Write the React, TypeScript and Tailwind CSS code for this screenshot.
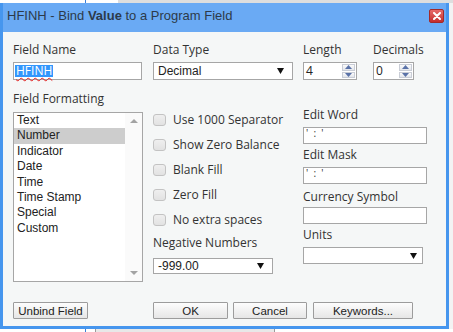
import type { ReactNode } from 'react'

const label = "font-['Open_Sans',sans-serif] text-[12px] leading-[16px] text-[#333]"
const arial = "font-['Liberation_Sans',Arial,sans-serif]"

function Caret() {
  return (
    <svg width="7" height="6" viewBox="0 0 7 6" className="shrink-0">
      <path d="M0 0 H7 L3.5 6 Z" fill="#111" />
    </svg>
  )
}

function Select({ value, w, h, caretRight = 8 }: { value: string; w: string; h: string; caretRight?: number }) {
  return (
    <div className={`${w} ${h} flex items-center border border-[#a6a6a6] bg-white pl-[4px] ${arial} text-[12px] text-[#222]`}>
      <span className="flex-1">{value}</span>
      <span style={{ marginRight: caretRight }}>
        <Caret />
      </span>
    </div>
  )
}

function Spinner({ value, w }: { value: string; w: string }) {
  return (
    <div className={`${w} flex h-[18px] items-stretch border border-[#a6a6a6] bg-white`}>
      <span className="flex-1 pl-[2px] font-['Open_Sans',sans-serif] text-[12px] leading-[16px] text-[#222]">{value}</span>
      <div className="my-[1px] mr-[1px] flex w-[13px] flex-col gap-[1px]">
        {[0, 1].map((i) => (
          <div
            key={i}
            className="flex flex-1 items-center justify-center border border-[#c9cdd6] bg-gradient-to-b from-[#fbfbfb] to-[#e3e6ec]"
          >
            <svg width="7" height="4" viewBox="0 0 7 4">
              <path d={i === 0 ? 'M0 4 L3.5 0 L7 4 Z' : 'M0 0 L3.5 4 L7 0 Z'} fill="#5a72a8" />
            </svg>
          </div>
        ))}
      </div>
    </div>
  )
}

function TextBox({ children }: { children?: ReactNode }) {
  return (
    <div className="h-[17px] w-[124px] border border-[#a6a6a6] bg-white pl-[2px] font-['Open_Sans',sans-serif] text-[10px] leading-[11px] whitespace-pre text-[#333]">
      {children}
    </div>
  )
}

function Check({ text }: { text: string }) {
  return (
    <div className="flex h-[25px] items-center">
      <span className="h-[12px] w-[13px] rounded-[3px] border border-[#c3c3c3] bg-gradient-to-b from-[#efefef] to-[#e2e2e2]" />
      <span className={`ml-[7px] ${label}`}>{text}</span>
    </div>
  )
}

function Btn({ text, w, ml }: { text: string; w: string; ml: string }) {
  return (
    <button
      className={`${w} ${ml} h-[17px] rounded-[1px] border border-[#9c9c9c] bg-gradient-to-b from-[#fdfdfd] to-[#e6e6e6] ${arial} text-[11.5px] leading-[14px] text-[#222]`}
    >
      {text}
    </button>
  )
}

const formats = ['Text', 'Number', 'Indicator', 'Date', 'Time', 'Time Stamp', 'Special', 'Custom']

export default function App() {
  return (
    <div className="flex h-[332px] w-[453px] flex-col overflow-hidden bg-white">
      {/* page behind the dialog */}
      <div className="flex h-[3px] shrink-0">
        <div className="w-[85px] bg-white" />
        <div className="w-[1px] bg-[#3c7fd8]" />
        <div className="w-[32px] bg-white" />
        <div className="flex-1 bg-[#dedede]" />
      </div>

      <div className="flex h-[326px] shrink-0">
        <div className="flex h-[326px] w-[449px] flex-col border-x-[3px] border-b-[3px] border-[#4696ee]">
          <div className="flex h-[29px] shrink-0 items-start bg-[#6aaaf4] pl-[4px] pr-[2px]">
            <span className={`mt-[5px] flex-1 ${arial} text-[13px] leading-[16px] text-[#2d3a4a]`}>
              HFINH - Bind <b>Value</b> to a Program Field
            </span>
            <span className="mt-[6px] flex h-[14px] w-[15px] items-center justify-center rounded-[2px] border border-[#a32a2a] bg-gradient-to-b from-[#e66a6a] to-[#c42b2b]">
              <svg width="8" height="8" viewBox="0 0 8 8">
                <path d="M1 1 L7 7 M7 1 L1 7" stroke="#fff" strokeWidth="2" strokeLinecap="round" />
              </svg>
            </span>
          </div>

          <div className="flex flex-1 flex-col bg-[#f5f7f7] pl-[10px] pt-[10px]">
            <div className="flex">
              {/* column 1 */}
              <div className="flex w-[130px] flex-col">
                <span className={label}>Field Name</span>
                <div className="mt-[4px] flex h-[18px] w-[129px] items-center border border-[#a6a6a6] bg-white pl-[1px]">
                  <span className="bg-[#3297fd] px-[1px] font-['Open_Sans',sans-serif] text-[12px] leading-[12px] text-white underline decoration-[#e02020] decoration-wavy decoration-[1px] underline-offset-[2px]">
                    HFINH
                  </span>
                </div>
                <span className={`mt-[11px] ${label}`}>Field Formatting</span>
                <div className="mt-[5px] flex h-[170px] border border-[#a6a6a6] bg-white">
                  <div className={`flex-1 ${arial} text-[12px] leading-[15.4px] text-[#222]`}>
                    {formats.map((f) => (
                      <div key={f} className={`pl-[3px] ${f === 'Number' ? 'bg-[#cdcdcd]' : ''}`}>
                        {f}
                      </div>
                    ))}
                  </div>
                  <div className="flex w-[17px] flex-col items-center justify-between bg-[#fafafa] py-[6px]">
                    <svg width="8" height="4" viewBox="0 0 8 4">
                      <path d="M0 4 L4 0 L8 4 Z" fill="#a3a3a3" />
                    </svg>
                    <svg width="8" height="4" viewBox="0 0 8 4">
                      <path d="M0 0 L4 4 L8 0 Z" fill="#a3a3a3" />
                    </svg>
                  </div>
                </div>
              </div>

              {/* column 2 */}
              <div className="ml-[10px] flex w-[140px] flex-col">
                <span className={label}>Data Type</span>
                <div className="mt-[4px]">
                  <Select value="Decimal" w="w-[140px]" h="h-[18px]" />
                </div>
                <div className="mt-[27px] flex flex-col">
                  <Check text="Use 1000 Separator" />
                  <Check text="Show Zero Balance" />
                  <Check text="Blank Fill" />
                  <Check text="Zero Fill" />
                  <Check text="No extra spaces" />
                </div>
                <span className={`mt-[3px] ${label}`}>Negative Numbers</span>
                <div className="mt-[7px]">
                  <Select value="-999.00" w="w-[120px]" h="h-[16px]" />
                </div>
              </div>

              {/* column 3 */}
              <div className="ml-[10px] flex w-[124px] flex-col">
                <div className="flex">
                  <div className="flex flex-col">
                    <span className={label}>Length</span>
                    <div className="mt-[4px]">
                      <Spinner value="4" w="w-[54px]" />
                    </div>
                  </div>
                  <div className="ml-[16px] flex flex-col">
                    <span className={label}>Decimals</span>
                    <div className="mt-[4px]">
                      <Spinner value="0" w="w-[41px]" />
                    </div>
                  </div>
                </div>
                <span className={`mt-[27px] ${label}`}>Edit Word</span>
                <div className="mt-[4px]">
                  <TextBox>{"'  :  '"}</TextBox>
                </div>
                <span className={`mt-[3px] ${label}`}>Edit Mask</span>
                <div className="mt-[4px]">
                  <TextBox>{"'  :  '"}</TextBox>
                </div>
                <span className={`mt-[5px] ${label}`}>Currency Symbol</span>
                <div className="mt-[2px]">
                  <TextBox />
                </div>
                <span className={`mt-[3px] ${label}`}>Units</span>
                <div className="mt-[4px]">
                  <Select value="" w="w-[120px]" h="h-[17px]" caretRight={5} />
                </div>
              </div>
            </div>

            <div className="mt-[20px] flex">
              <Btn text="Unbind Field" w="w-[75px]" ml="ml-0" />
              <Btn text="OK" w="w-[75px]" ml="ml-[65px]" />
              <Btn text="Cancel" w="w-[74px]" ml="ml-[5px]" />
              <Btn text="Keywords..." w="w-[100px]" ml="ml-[6px]" />
            </div>
          </div>
        </div>
        <div className="flex-1 bg-[#f3f3f3]" />
      </div>

      <div className="flex h-[3px] shrink-0">
        <div className="w-[85px] bg-white" />
        <div className="w-[1px] bg-[#3c7fd8]" />
        <div className="w-[9px] bg-white" />
        <div className="w-[180px] border-x border-[#9a9a9a] bg-[#e8e8e8]" />
        <div className="flex-1 bg-white" />
      </div>
    </div>
  )
}
